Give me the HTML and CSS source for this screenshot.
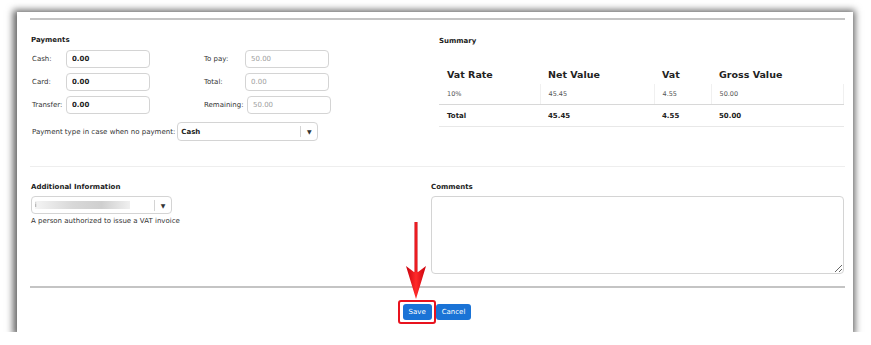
FILE: index.html
```html
<!DOCTYPE html>
<html lang="en">
<head>
  <meta charset="UTF-8">
  <title>Payment and Summary</title>
  <link rel="stylesheet" href="styles.css">
</head>
<body>
  <div class="panel">
    <div class="rule-strong"></div>

    <!-- Payments + Summary -->
    <div class="top">
      <div class="payments">
        <h3>Payments</h3>
        <div class="pay-grid">
          <label>Cash:</label>
          <input type="text" class="field bold" value="0.00">
          <label>To pay:</label>
          <input type="text" class="field muted" value="50.00" readonly>

          <label>Card:</label>
          <input type="text" class="field bold" value="0.00">
          <label>Total:</label>
          <input type="text" class="field muted" value="0.00" readonly>

          <label>Transfer:</label>
          <input type="text" class="field bold" value="0.00">
          <label>Remaining:</label>
          <input type="text" class="field muted shift" value="50.00" readonly>
        </div>
        <div class="pay-type">
          <label>Payment type in case when no payment:</label>
          <div class="select wide">
            <span class="select-value">Cash</span>
            <span class="select-arrow">&#9660;</span>
          </div>
        </div>
      </div>

      <div class="summary">
        <h3>Summary</h3>
        <table class="sum-table">
          <thead>
            <tr>
              <th class="c1">Vat Rate</th>
              <th class="c2">Net Value</th>
              <th class="c3">Vat</th>
              <th class="c4">Gross Value</th>
            </tr>
          </thead>
          <tbody>
            <tr class="data">
              <td>10%</td>
              <td>45.45</td>
              <td>4.55</td>
              <td>50.00</td>
            </tr>
            <tr class="total">
              <td>Total</td>
              <td>45.45</td>
              <td>4.55</td>
              <td>50.00</td>
            </tr>
          </tbody>
        </table>
      </div>
    </div>

    <div class="rule-light"></div>

    <!-- Additional info + Comments -->
    <div class="bottom">
      <div class="additional">
        <h3>Additional Information</h3>
        <div class="select narrow">
          <span class="select-value"><span class="blurred">i</span></span>
          <span class="select-arrow">&#9660;</span>
        </div>
        <p class="hint">A person authorized to issue a VAT invoice</p>
      </div>
      <div class="comments">
        <h3>Comments</h3>
        <textarea></textarea>
      </div>
    </div>

    <div class="rule-strong"></div>

    <div class="actions">
      <span class="highlight"><button class="btn save">Save</button></span>
      <button class="btn">Cancel</button>
    </div>

    <!-- annotation arrow pointing at Save -->
    <svg class="arrow" width="24" height="80" viewBox="0 0 24 80">
      <defs>
        <linearGradient id="red" x1="0" x2="1" y1="0" y2="0">
          <stop offset="0" stop-color="#c8000c"/>
          <stop offset="0.5" stop-color="#ff2a2a"/>
          <stop offset="1" stop-color="#c8000c"/>
        </linearGradient>
      </defs>
      <rect x="10.5" y="0" width="3" height="50" fill="url(#red)"/>
      <path d="M2 44 L12 77 L22 44 L14 50 L10 50 Z" fill="url(#red)"/>
    </svg>
  </div>
</body>
</html>
```

FILE: styles.css
```css
body {
  margin: 0;
  background-color: #ffffff;
  font-family: "DejaVu Sans", Verdana, sans-serif;
  font-size: 7px;
  color: #333;
}

.panel {
  position: relative;
  box-sizing: border-box;
  width: 836px;
  height: 320px;
  margin: 12px 0 0 17px;
  padding: 6px 8px 0 13px;
  background-color: #fff;
  box-shadow: -1px 1px 7px 3px rgba(0, 0, 0, 0.6);
}

h3 {
  margin: 0;
  font-size: 7px;
  line-height: 10px;
  font-weight: bold;
  color: #222;
}

.rule-strong {
  height: 2px;
  background-color: #c4c4c4;
}

.rule-light {
  height: 1px;
  background-color: #eeeeee;
}

/* top area */
.top {
  display: flex;
  height: 146px;
}

.payments {
  width: 408px;
  padding: 15px 0 0 1px;
}

.pay-grid {
  display: grid;
  grid-template-columns: 35px 84px 95px 84px;
  row-gap: 5px;
  align-items: center;
  margin-top: 5px;
}

.pay-grid label:nth-child(4n+3) {
  margin-left: 53px;
}

label {
  padding-left: 1px;
  color: #333;
}

.field {
  box-sizing: border-box;
  width: 84px;
  height: 18px;
  padding: 0 5px;
  border: 1px solid #d4d4d4;
  border-radius: 4px;
  font-family: inherit;
  font-size: 7px;
  color: #222;
  background: #fff;
}

.field.bold {
  font-weight: bold;
}

.field.muted {
  color: #a0a0a0;
}

.field.shift {
  margin-left: 2px;
}

.pay-type {
  display: flex;
  align-items: center;
  margin-top: 8px;
}

.pay-type label {
  margin-right: 2px;
}

.select {
  box-sizing: border-box;
  display: flex;
  align-items: center;
  height: 19px;
  border: 1px solid #d4d4d4;
  border-radius: 4px;
  background: #fff;
}

.select.wide {
  width: 141px;
}

.select.narrow {
  width: 141px;
  height: 18px;
  margin-top: 4px;
}

.select-value {
  flex: 1;
  padding-left: 3px;
  font-weight: bold;
  color: #222;
}

.select-arrow {
  width: 16px;
  border-left: 1px solid #d4d4d4;
  line-height: 11px;
  text-align: center;
  font-size: 6px;
  color: #333;
}

.blurred {
  display: inline-block;
  width: 95px;
  height: 8px;
  vertical-align: middle;
  font-weight: normal;
  font-size: 6px;
  line-height: 8px;
  color: #777;
  background: linear-gradient(90deg, #f4f4f4, #d8d8d8 40%, #cfcfcf 70%, #f0f0f0);
  filter: blur(0.6px);
}

/* summary */
.summary {
  flex: 1;
  padding-top: 16px;
}

.sum-table {
  width: 405px;
  margin-top: 18px;
  border-collapse: collapse;
}

.sum-table th {
  padding: 0 8px;
  height: 20px;
  text-align: left;
  font-size: 9.5px;
  font-weight: bold;
  color: #222;
  vertical-align: middle;
}

.sum-table .c1 { width: 85px; }
.sum-table .c2 { width: 98px; }
.sum-table .c3 { width: 41px; }

.sum-table td {
  padding: 0 8px;
  text-align: left;
}

.sum-table tr.data td {
  height: 20px;
  font-size: 6.5px;
  color: #555;
  border-left: 1px solid #f0f0f0;
  border-bottom: 1px solid #d8d8d8;
}

.sum-table tr.data td:first-child {
  border-left: none;
}

.sum-table tr.data td:last-child {
  border-right: 1px solid #f0f0f0;
}

.sum-table tr.total td {
  height: 21px;
  font-weight: bold;
  font-size: 7px;
  color: #222;
  border-bottom: 1px solid #e8e8e8;
}

/* bottom area */
.bottom {
  display: flex;
  height: 119px;
}

.additional {
  width: 400px;
  padding: 15px 0 0 1px;
}

.hint {
  margin: 2px 0 0;
  line-height: 10px;
}

.comments {
  flex: 1;
  padding-top: 15px;
}

.comments textarea {
  box-sizing: border-box;
  display: block;
  width: 413px;
  height: 78px;
  margin-top: 4px;
  border: 1px solid #d4d4d4;
  border-radius: 4px;
  resize: both;
}

/* buttons */
.actions {
  display: flex;
  justify-content: center;
  align-items: center;
  gap: 0;
  padding-top: 12px;
  padding-right: 6px;
}

.highlight {
  display: inline-flex;
  padding: 2px 2px 2px 3px;
  border: 2px solid #e8131e;
  border-radius: 3px;
}

.btn {
  height: 16px;
  padding: 0 6px;
  border: none;
  border-radius: 3px;
  background-color: #1a73d6;
  color: #fff;
  font-family: inherit;
  font-size: 7px;
  cursor: pointer;
}

.btn.save {
  width: 29px;
  padding: 0;
}

.arrow {
  position: absolute;
  left: 387px;
  top: 210px;
}
```
